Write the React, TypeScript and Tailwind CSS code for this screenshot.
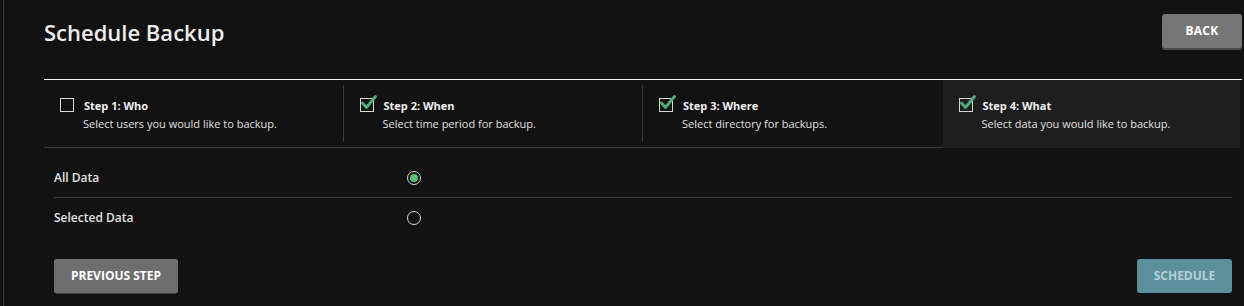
import { useState } from "react"

const steps = [
  { title: "Step 1: Who", desc: "Select users you would like to backup.", done: false },
  { title: "Step 2: When", desc: "Select time period for backup.", done: true },
  { title: "Step 3: Where", desc: "Select directory for backups.", done: true },
  { title: "Step 4: What", desc: "Select data you would like to backup.", done: true },
]

const Check = ({ done }: { done: boolean }) => (
  <div className="relative w-[14px] h-[14px] border border-[#d8d8d8] shrink-0 mt-[1px]">
    {done && (
      <svg className="absolute -left-[1px] -top-[4px]" width="18" height="16" viewBox="0 0 18 16">
        <path d="M2.5 8 L6.5 12.5 L15.5 1.5" fill="none" stroke="#4fae7f" strokeWidth="2.8" strokeLinecap="round" strokeLinejoin="round" />
      </svg>
    )}
  </div>
)

const Radio = ({ on }: { on: boolean }) => (
  <div className="w-[14px] h-[14px] rounded-full border-[1.5px] border-[#d6d6d6] flex items-center justify-center">
    {on && <div className="w-[8px] h-[8px] rounded-full bg-[#55c07a]"></div>}
  </div>
)

export default function App() {
  const [pick, setPick] = useState("all")
  return (
    <div className="w-[1244px] h-[306px] bg-[#121212] text-[#e6e6e6] font-['Open_Sans',sans-serif] flex overflow-hidden">
      <div className="w-[3px] shrink-0"></div>
      <div className="w-[1px] bg-[#3a3a3a] shrink-0"></div>
      <div className="flex-1 pl-[40px] pr-[2px]">
        <div className="flex justify-between items-start h-[79px]">
          <h1 className="text-[22px] font-semibold pt-[17px] leading-[30px] text-[#ececec]">Schedule Backup</h1>
          <button className="mt-[14px] w-[80px] h-[34px] rounded-[3px] bg-[#767676] shadow-[0_2px_0_#4a4a4a] text-white text-[12px] font-bold tracking-wide">
            BACK
          </button>
        </div>
        <div className="h-[1px] bg-[#f2f2f2]"></div>
        <div className="grid grid-cols-4 h-[68px]">
          {steps.map((s, i) => (
            <div
              key={s.title}
              className={
                i === 3
                  ? "bg-[#1e1e1e] pl-[16px] pt-[17px] flex gap-[10px] mr-[2px]"
                  : "relative border-b border-[#3c3c3c] pl-[16px] pt-[17px] flex gap-[10px]"
              }
            >
              {i < 2 && <div className="absolute right-0 top-[5px] bottom-[5px] w-[1px] bg-[#3a3a3a]"></div>}
              <Check done={s.done} />
              <div className="leading-[17px]">
                <div className="text-[11px] font-bold text-[#f0f0f0]">{s.title}</div>
                <div className="text-[11px] text-[#e0e0e0] -ml-[1px] mt-[1px]">{s.desc}</div>
              </div>
            </div>
          ))}
        </div>
        <div className="px-[10px] pt-[10px]">
          <div
            className="flex items-center h-[40px] pt-[1px] border-b border-[#3e3e3e] cursor-pointer"
            onClick={() => setPick("all")}
          >
            <div className="w-[353px] text-[12px] font-semibold text-[#e2e2e2]">All Data</div>
            <Radio on={pick === "all"} />
          </div>
          <div className="flex items-center h-[40px] cursor-pointer" onClick={() => setPick("sel")}>
            <div className="w-[353px] text-[12px] font-semibold text-[#e2e2e2]">Selected Data</div>
            <Radio on={pick === "sel"} />
          </div>
          <div className="flex justify-between mt-[21px]">
            <button className="w-[124px] h-[34px] rounded-[3px] bg-[#6e6e6e] shadow-[0_1px_0_#3e3e3e] text-white text-[12px] font-bold">
              PREVIOUS STEP
            </button>
            <button className="w-[95px] h-[34px] rounded-[3px] bg-[#5b8f9c] text-[#b5cfd6] text-[12px] font-bold">
              SCHEDULE
            </button>
          </div>
        </div>
      </div>
    </div>
  )
}
